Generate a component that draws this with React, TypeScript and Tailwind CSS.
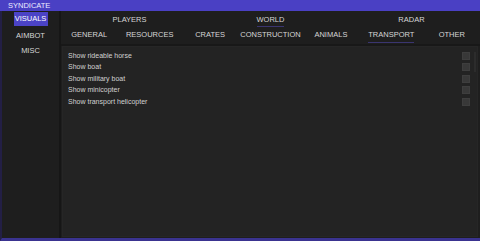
const topTabs = ["PLAYERS", "WORLD", "RADAR"];
const subTabs = ["GENERAL", "RESOURCES", "CRATES", "CONSTRUCTION", "ANIMALS", "TRANSPORT", "OTHER"];
const options = [
  "Show rideable horse",
  "Show boat",
  "Show military boat",
  "Show minicopter",
  "Show transport helicopter",
];

export default function App() {
  return (
    <div
      className="w-[480px] h-[241px] flex flex-col bg-[#1d1d1d] text-[#d6d6d6] overflow-hidden"
      style={{ fontFamily: '"Liberation Sans", Arial, sans-serif' }}
    >
      <div className="h-[11px] bg-[#4a40c4] flex items-center pl-[8px] text-[7.5px] leading-none text-[#ececff]">
        SYNDICATE
      </div>
      <div className="flex-1 flex border-l-2 border-[#231f45] border-b-[3px] border-b-[#3a3390] min-h-0">
        {/* sidebar */}
        <aside className="w-[57px] flex flex-col items-center pt-[1px] bg-[#1e1e1e]">
          <span className="px-[3px] h-[14px] w-[34px] flex items-center justify-center bg-[#4b43c6] text-[7.5px] text-white">
            VISUALS
          </span>
          <span className="mt-[3px] h-[14px] flex items-center text-[7.5px]">AIMBOT</span>
          <span className="mt-[1px] h-[14px] flex items-center text-[7.5px]">MISC</span>
        </aside>
        <div className="w-[2px] bg-[#161616]" />
        {/* main */}
        <main className="flex-1 flex flex-col min-w-0 bg-[#1e1e1e]">
          <div className="grid grid-cols-3 h-[16px] pt-[3px] -mx-[2px]">
            {topTabs.map((t) => (
              <div key={t} className="flex justify-center">
                <span
                  className={
                    "h-[13px] flex items-center text-[7.5px] border-b " +
                    (t === "WORLD" ? "border-[#3a3570]" : "border-transparent")
                  }
                >
                  {t}
                </span>
              </div>
            ))}
          </div>
          <div className="grid grid-cols-7 h-[17px] pt-[1px] -mx-[2px]">
            {subTabs.map((t) => (
              <div key={t} className="flex justify-center">
                <span
                  className={
                    "h-[15px] flex items-center text-[7.5px] border-b " +
                    (t === "TRANSPORT" ? "border-[#3a3570]" : "border-transparent")
                  }
                >
                  {t}
                </span>
              </div>
            ))}
          </div>
          <div className="h-[2px] bg-[#181818]" />
          <div className="flex-1 flex ml-[1px] mr-[2px] mb-[1px] bg-[#232323] border border-[#262626]">
            <div className="flex-1 flex flex-col pt-[3px] pl-[5px] pr-[4px]">
              {options.map((o) => (
                <div key={o} className="h-[11.5px] flex items-center justify-between">
                  <span className="text-[7px] text-[#d2d2d2]">{o}</span>
                  <span className="w-[8px] h-[8px] bg-[#383838] border border-[#3e3e3e]" />
                </div>
              ))}
            </div>
            <div className="w-[3px] pt-[5px] pr-[1px]">
              <div className="h-[20px] w-[2px] bg-[#2c2c2c]" />
            </div>
          </div>
        </main>
      </div>
    </div>
  );
}
